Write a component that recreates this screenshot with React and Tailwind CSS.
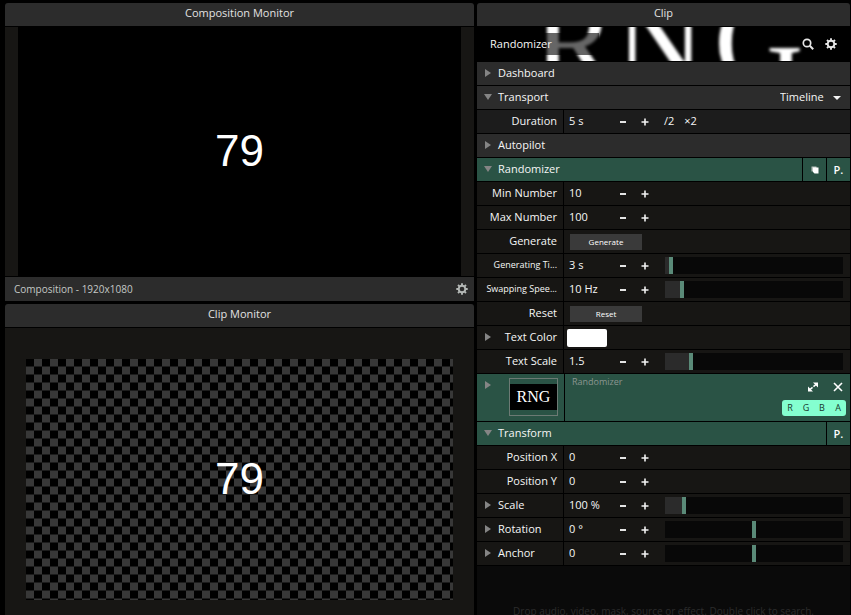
import React from "react";

const font = 'font-["Open_Sans","Noto_Sans",sans-serif]';

function Gear({ className }) {
  return (
    <svg viewBox="0 0 12 12" className={`h-3 w-3 ${className}`} fill="none" stroke="currentColor" aria-hidden="true">
      <circle cx="6" cy="6" r="3.3" strokeWidth="1.9" />
      <path strokeWidth="1.9" d="M6 .3v2M6 9.7v2M.3 6h2M9.7 6h2M2 2l1.4 1.4M8.6 8.6L10 10M10 2L8.6 3.4M3.4 8.6L2 10" />
    </svg>
  );
}

function Triangle({ open }) {
  return (
    <svg viewBox="0 0 8 8" className="h-2 w-2 shrink-0" fill="#858585" aria-hidden="true">
      {open ? <path d="M0 1h8L4 7z" /> : <path d="M1 0l6 4-6 4z" />}
    </svg>
  );
}

function PanelTitle({ children }) {
  return (
    <h2 className="mb-px h-[23px] rounded-t-[3px] bg-[#2c2c2c] text-center leading-[19px] text-[#e2e2e2]">{children}</h2>
  );
}

function Section({ title, open, green, children }) {
  return (
    <div className="mb-px flex h-[23px] gap-px">
      <div className={`flex min-w-0 flex-1 justify-between ${green ? "bg-[#2a5345]" : "bg-[#2c2c2c]"}`}>
        <button type="button" aria-expanded={!!open} className="flex items-center gap-1.5 pb-0.5 pl-[7px]">
          <Triangle open={open} />
          {title}
        </button>
        {!green && children}
      </div>
      {green && children}
    </div>
  );
}

function SquareButton({ label, children }) {
  return (
    <button type="button" aria-label={label} className="flex w-[23px] items-center justify-center bg-[#2a5345] font-semibold text-white">
      {children}
    </button>
  );
}

function Row({ id, label, arrow, left, tight, lighter, children }) {
  return (
    <div className="mb-px flex h-[23px] gap-px">
      <div className={`flex w-[86px] shrink-0 items-center pr-1.5 pb-0.5 pl-[7px] ${lighter ? "bg-[#1c1c1c]" : "bg-[#171614]"}`}>
        {arrow && (
          <button type="button" aria-label={`Expand ${label}`} aria-expanded="false">
            <Triangle />
          </button>
        )}
        <label
          htmlFor={id}
          className={`flex-1 whitespace-nowrap ${left ? "pl-1.5 text-left" : "text-right"} ${tight ? "text-[9px]" : ""}`}
        >
          {label}
        </label>
      </div>
      <div className={`flex min-w-0 flex-1 items-center ${lighter ? "bg-[#1c1c1c]" : "bg-[#171614]"}`}>{children}</div>
    </div>
  );
}

function Stepper({ id, value }) {
  return (
    <>
      <input id={id} type="text" defaultValue={value} className="h-5 w-12 shrink-0 bg-transparent pb-0.5 pl-[5px] outline-none" />
      <button type="button" aria-label="Decrease" className="flex h-5 w-[22px] shrink-0 items-center justify-center">
        <span className="h-[2px] w-1.5 bg-[#e4e4e4]" />
      </button>
      <button type="button" aria-label="Increase" className="flex h-5 w-[22px] shrink-0 items-center justify-center">
        <svg viewBox="0 0 8 8" className="h-2 w-2" stroke="#f2f2f2" strokeWidth="1.6" aria-hidden="true">
          <path d="M4 .5v7M.5 4h7" />
        </svg>
      </button>
    </>
  );
}

function Slider({ label, value, centered }) {
  const edge = `calc((100% - 4px) * ${value / 1000} + 2px)`;
  const track = centered ? "#080808" : `linear-gradient(to right, #2b2b2b ${edge}, #080808 ${edge})`;
  return (
    <input
      type="range"
      min="0"
      max="1000"
      defaultValue={value}
      aria-label={label}
      style={{ background: track }}
      className="mr-[7px] ml-[9px] h-[17px] min-w-0 flex-1 appearance-none [&::-webkit-slider-thumb]:h-[17px] [&::-webkit-slider-thumb]:w-1 [&::-webkit-slider-thumb]:appearance-none [&::-webkit-slider-thumb]:bg-[#5a8a78]"
    />
  );
}

function NumberRow({ id, label, value, slider, centered, ...rest }) {
  return (
    <Row id={id} label={label} {...rest}>
      <Stepper id={id} value={value} />
      {slider !== undefined && <Slider label={`${label} slider`} value={slider} centered={centered} />}
    </Row>
  );
}

function ActionRow({ id, label }) {
  return (
    <Row id={id} label={label}>
      <button id={id} type="button" className="ml-1.5 h-4 w-[72px] bg-[#3a3a3a] text-[8px] leading-4 font-medium text-white">
        {label}
      </button>
    </Row>
  );
}

function Banner() {
  return (
    <div className="relative mb-px h-[34px] overflow-hidden bg-black">
      <svg className="absolute inset-0 h-full w-full" viewBox="0 0 373 34" preserveAspectRatio="xMidYMid slice" aria-hidden="true">
        <defs>
          <filter id="soft" x="-10%" y="-50%" width="120%" height="200%">
            <feGaussianBlur stdDeviation="1.5" />
          </filter>
        </defs>
        <g fill="#fff" filter="url(#soft)" fontFamily="Liberation Serif, serif" fontSize="124">
          <text x="56" y="57">R</text>
          <text x="138" y="57">N</text>
          <text x="237" y="57">G</text>
        </g>
      </svg>
      <div className="relative flex h-full items-center pr-[13px] pl-2">
        <input
          type="text"
          aria-label="Clip name"
          defaultValue="Randomizer"
          className="h-[22px] w-[114px] bg-black/60 pb-0.5 pl-[5px] outline-none"
        />
        <button type="button" aria-label="Search" className="ml-auto">
          <svg viewBox="0 0 12 12" className="h-3 w-3" fill="none" stroke="#e6e6e6" strokeWidth="1.7" aria-hidden="true">
            <circle cx="5" cy="5" r="3.7" />
            <path strokeWidth="2" d="M7.8 7.8l3.4 3.4" />
          </svg>
        </button>
        <button type="button" aria-label="Clip settings" className="ml-[11px] text-[#e6e6e6]">
          <Gear />
        </button>
      </div>
    </div>
  );
}

function EffectRow() {
  return (
    <div className="mb-px flex h-[47px] gap-px">
      <div className="flex w-[87px] shrink-0 justify-between bg-[#2a5345] pt-1 pr-1.5 pl-[7px]">
        <button type="button" aria-label="Expand source" className="mt-[3px] h-2">
          <Triangle />
        </button>
        <div className="flex h-[38px] w-[49px] items-center border border-[#6c7a74]">
          <div className='h-[26px] w-full bg-black text-center font-["Liberation_Serif",serif] text-[16px] leading-[26px] text-white'>
            RNG
          </div>
        </div>
      </div>
      <div className="flex flex-1 justify-between bg-[#2a5345] pr-1 pl-[7px]">
        <span className="text-[9px] leading-4 text-[#8b9691]">Randomizer</span>
        <div className="flex flex-col items-end gap-[5px] pt-[5px]">
          <div className="flex gap-[13px] pr-[2px]">
            <button type="button" aria-label="Enlarge">
              <svg viewBox="0 0 12 12" className="h-4 w-3" fill="#fff" aria-hidden="true">
                <path d="M6 1.5h5v5zM1 5.5v5h5z" />
                <path d="M3 8.5L9 3.5" stroke="#fff" strokeWidth="1.6" strokeDasharray="3.3 1.2" />
              </svg>
            </button>
            <button type="button" aria-label="Remove">
              <svg viewBox="0 0 12 12" className="h-4 w-3" stroke="#fff" strokeWidth="1.6" aria-hidden="true">
                <path d="M2 2l8 8M10 2l-8 8" />
              </svg>
            </button>
          </div>
          <div className="flex h-4 rounded-[3px] bg-[#84ffd0] text-[9px] leading-4 font-medium text-[#17372c]">
            {["R", "G", "B", "A"].map((c) => (
              <button key={c} type="button" className="w-4">
                {c}
              </button>
            ))}
          </div>
        </div>
      </div>
    </div>
  );
}

export default function App() {
  return (
    <div
      className={`grid h-screen grid-cols-[469fr_373fr] gap-[3px] overflow-hidden bg-black pt-[3px] pr-px pl-[5px] text-[11px] leading-4 text-[#f6f6f6] ${font}`}
    >
      <div className="flex min-w-0 flex-col gap-[3px]">
        <section>
          <PanelTitle>Composition Monitor</PanelTitle>
          <div className="bg-[#171614] px-[13px]">
            <div className='flex aspect-[443/249] items-center justify-center bg-black pb-0.5 font-["Liberation_Sans",sans-serif] text-[44px] leading-none text-white'>
              79
            </div>
          </div>
          <div className="mt-px flex h-6 items-center justify-between bg-[#2c2c2c] pr-1.5 pl-[9px] text-[10px] text-[#c4c8c6]">
            <span>Composition - 1920x1080</span>
            <button type="button" aria-label="Monitor settings" className="text-[#b4b8b6]">
              <Gear />
            </button>
          </div>
        </section>
        <section className="flex flex-1 flex-col">
          <PanelTitle>Clip Monitor</PanelTitle>
          <div className="flex-1 bg-[#171614] px-[21px] pt-[31px]">
            <div className='flex aspect-[427/241] items-center justify-center bg-[linear-gradient(transparent_7px,#1c1c1c_7px),conic-gradient(#383838_25%,#000_0_50%,#383838_0_75%,#000_0)] bg-[length:8px_8px,16px_16px] pb-0.5 font-["Liberation_Sans",sans-serif] text-[44px] leading-none text-white'>
              79
            </div>
          </div>
        </section>
      </div>

      <section className="flex min-w-0 flex-col">
        <PanelTitle>Clip</PanelTitle>
        <Banner />
        <Section title="Dashboard" />
        <Section title="Transport" open>
          <div className="relative flex items-center">
            <select aria-label="Transport mode" className="h-5 w-[70px] appearance-none bg-transparent pb-0.5 outline-none">
              <option>Timeline</option>
            </select>
            <svg viewBox="0 0 8 4" className="pointer-events-none absolute right-[9px] h-1 w-2" fill="#f4f4f4" aria-hidden="true">
              <path d="M0 0h8L4 4z" />
            </svg>
          </div>
        </Section>
        <Row id="duration" label="Duration" lighter>
          <Stepper id="duration" value="5 s" />
          <button type="button" className="ml-2 pb-0.5">/2</button>
          <button type="button" className="ml-2.5 pb-0.5">×2</button>
        </Row>
        <Section title="Autopilot" />
        <Section title="Randomizer" open green>
          <SquareButton label="Presets">
            <svg viewBox="0 0 8 8" className="h-2 w-2" aria-hidden="true">
              <path d="M.5 .5h5v5h-5z" fill="#b9c4bf" />
              <path d="M2 1.5h5.5v6H3.5L2 6z" fill="#fff" />
            </svg>
          </SquareButton>
          <SquareButton label="Randomizer parameters">P.</SquareButton>
        </Section>
        <NumberRow id="min" label="Min Number" value="10" />
        <NumberRow id="max" label="Max Number" value="100" />
        <ActionRow id="generate" label="Generate" />
        <NumberRow id="gentime" label="Generating Ti..." value="3 s" slider={23} tight />
        <NumberRow id="swap" label="Swapping Spee..." value="10 Hz" slider={86} tight />
        <ActionRow id="reset" label="Reset" />
        <Row id="color" label="Text Color" arrow>
          <input
            id="color"
            type="color"
            defaultValue="#ffffff"
            className="ml-[3px] h-[18px] w-10 appearance-none overflow-hidden rounded-[2px] bg-white [&::-webkit-color-swatch]:border-0 [&::-webkit-color-swatch-wrapper]:p-0"
          />
        </Row>
        <NumberRow id="textscale" label="Text Scale" value="1.5" slider={138} />
        <EffectRow />
        <Section title="Transform" open green>
          <SquareButton label="Transform parameters">P.</SquareButton>
        </Section>
        <NumberRow id="posx" label="Position X" value="0" />
        <NumberRow id="posy" label="Position Y" value="0" />
        <NumberRow id="scale" label="Scale" value="100 %" slider={98} arrow left />
        <NumberRow id="rotation" label="Rotation" value="0 °" slider={500} centered arrow left />
        <NumberRow id="anchor" label="Anchor" value="0" slider={500} centered arrow left />
        <div className="min-h-0 flex-1 overflow-hidden bg-[#0a0a0a] pt-[37px] text-center text-[10px] whitespace-nowrap text-[#2c2c2c]">
          Drop audio, video, mask, source or effect. Double click to search.
        </div>
      </section>
    </div>
  );
}
